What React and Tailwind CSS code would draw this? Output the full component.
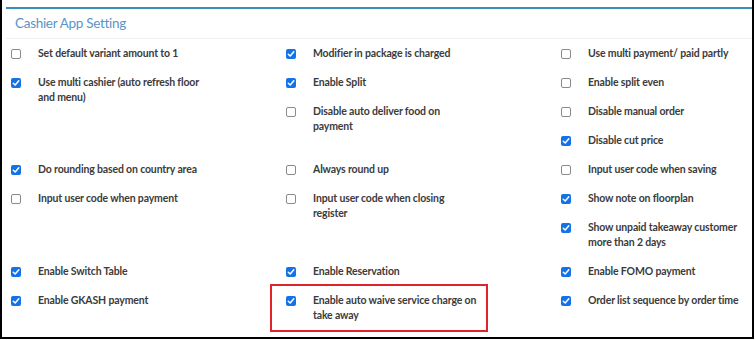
import React from "react";

const groups = [
  [
    [
      { c: false, t: ["Set default variant amount to 1"] },
      { c: true, t: ["Use multi cashier (auto refresh floor", "and menu)"] },
    ],
    [
      { c: true, t: ["Modifier in package is charged"] },
      { c: true, t: ["Enable Split"] },
      { c: false, t: ["Disable auto deliver food on", "payment"] },
    ],
    [
      { c: false, t: ["Use multi payment/ paid partly"] },
      { c: false, t: ["Enable split even"] },
      { c: false, t: ["Disable manual order"] },
      { c: true, t: ["Disable cut price"] },
    ],
  ],
  [
    [
      { c: true, t: ["Do rounding based on country area"] },
      { c: false, t: ["Input user code when payment"] },
    ],
    [
      { c: false, t: ["Always round up"] },
      { c: false, t: ["Input user code when closing", "register"] },
    ],
    [
      { c: false, t: ["Input user code when saving"] },
      { c: true, t: ["Show note on floorplan"] },
      { c: true, t: ["Show unpaid takeaway customer", "more than 2 days"] },
    ],
  ],
  [
    [
      { c: true, t: ["Enable Switch Table"] },
      { c: true, t: ["Enable GKASH payment"] },
    ],
    [
      { c: true, t: ["Enable Reservation"] },
      { c: true, t: ["Enable auto waive service charge on", "take away"], hl: true },
    ],
    [
      { c: true, t: ["Enable FOMO payment"] },
      { c: true, t: ["Order list sequence by order time"] },
    ],
  ],
];

function Box({ checked }) {
  if (checked) {
    return (
      <span className="mt-[3px] flex h-[10px] w-[10px] shrink-0 items-center justify-center rounded-[2px] bg-[#1372e6]">
        <svg width="8" height="8" viewBox="0 0 8 8">
          <path d="M1.3 4.2 L3.2 6 L6.8 1.8" fill="none" stroke="#fff" strokeWidth="1.5" strokeLinecap="round" strokeLinejoin="round" />
        </svg>
      </span>
    );
  }
  return <span className="mt-[3px] h-[10px] w-[10px] shrink-0 rounded-[2px] border border-[#8a8a8a] bg-white" />;
}

function Item({ item }) {
  return (
    <div className="relative flex py-[7px]">
      <Box checked={item.c} />
      <div className="ml-[17px] flex flex-col text-[10.5px] font-bold leading-[15px] tracking-[-0.15px] text-[#3b3b3b]">
        {item.t.map((l, i) => (
          <span key={i} className="whitespace-nowrap">{l}</span>
        ))}
      </div>
      {item.hl && (
        <div className="pointer-events-none absolute left-[-16px] top-[-2px] h-[48px] w-[218px] border-2 border-[#e3222b]" />
      )}
    </div>
  );
}

export default function App() {
  return (
    <div
      className="h-[339px] w-[754px] overflow-hidden border-x-2 border-b-2 border-black bg-white"
      style={{ fontFamily: "Lato, 'Liberation Sans', sans-serif" }}
    >
      <div className="ml-[4px] mt-[7px] border-t-2 border-[#3c8dbc]">
        <div className="flex h-[30px] items-center border-b border-[#f0f0f0] pl-[9px] text-[13.5px] tracking-[-0.3px] text-[#5a94c8]">
          Cashier App Setting
        </div>
        <div className="pl-[5px]">
          {groups.map((g, gi) => (
            <div key={gi} className="grid grid-cols-[275px_275px_275px]">
              {g.map((col, ci) => (
                <div key={ci} className="flex flex-col">
                  {col.map((it, ii) => (
                    <Item key={ii} item={it} />
                  ))}
                </div>
              ))}
            </div>
          ))}
        </div>
      </div>
    </div>
  );
}
